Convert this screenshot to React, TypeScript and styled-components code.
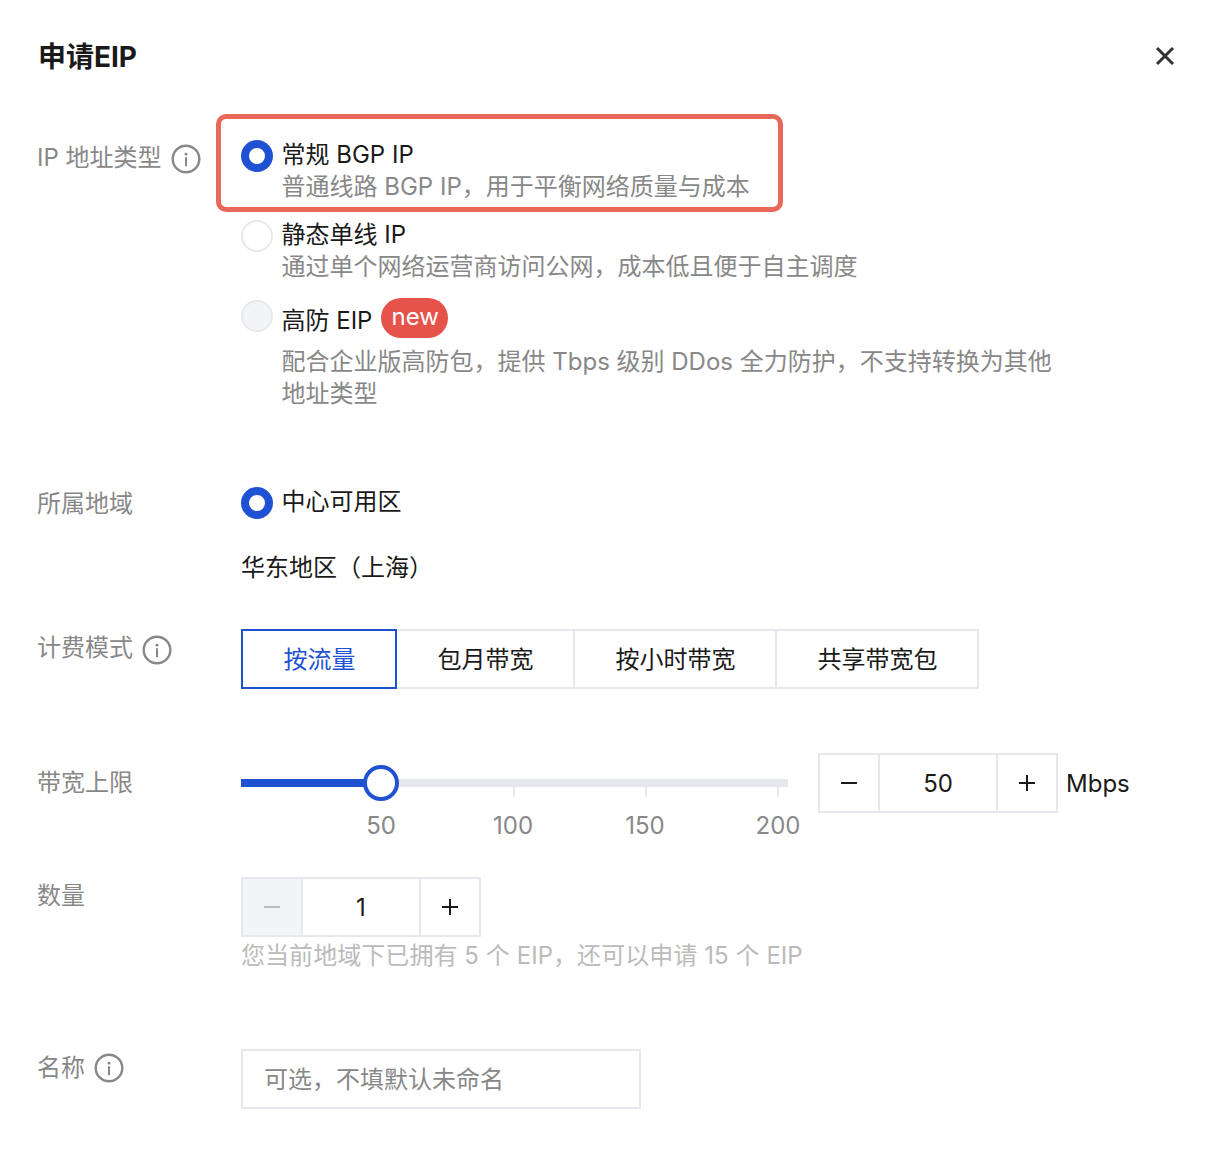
import styled, { createGlobalStyle } from "styled-components";

const BLUE = "#1f52d3";
const LINE = "#e7e8ee";

const GlobalStyle = createGlobalStyle`
    html, body {
        margin: 0;
        padding: 0;
        background: #ffffff;
    }
    * {
        box-sizing: border-box;
    }
    body {
        font-family: Inter, "Noto Sans CJK SC", sans-serif;
        font-size: 24px;
        line-height: 32px;
        color: #1a1a1a;
    }
`;

const Dialog = styled.div`
    width: 1216px;
    height: 1164px;
    padding: 40px 40px 0 38px;
    overflow: hidden;
`;

const Header = styled.div`
    display: flex;
    justify-content: space-between;
    align-items: center;
    height: 32px;
    margin-bottom: 67px;
`;

const Title = styled.h1`
    margin: 0;
    padding-top: 1px;
    font-size: 28px;
    line-height: 32px;
    font-weight: 700;
    color: #1a1a1a;
`;

const CloseButton = styled.svg`
    width: 24px;
    height: 24px;
    margin-right: -1px;
    color: #333333;
`;

const Row = styled.div<{ $top?: number }>`
    display: flex;
    align-items: flex-start;
    margin-top: ${(p) => p.$top ?? 0}px;
`;

const Label = styled.div<{ $pad?: number }>`
    display: flex;
    align-items: center;
    gap: 9px;
    flex: 0 0 204px;
    height: 32px;
    margin-top: ${(p) => p.$pad ?? 0}px;
    margin-left: -1px;
    color: #888888;
    white-space: nowrap;
`;

const InfoGlyph = styled.svg<{ $nudge: number }>`
    width: 30px;
    height: 30px;
    margin-top: ${(p) => p.$nudge}px;
    color: #888888;
`;

const Content = styled.div`
    flex: 1;
    min-width: 0;
`;

const OptionList = styled.div`
    position: relative;
    display: flex;
    flex-direction: column;
    gap: 16px;
`;

const Highlight = styled.div`
    position: absolute;
    left: -25px;
    top: -25px;
    width: 567px;
    height: 98px;
    border: 5px solid #e8695a;
    border-radius: 10px;
`;

const Option = styled.div`
    display: grid;
    grid-template-columns: 32px 1fr;
    column-gap: 8.5px;
`;

const Radio = styled.span<{ $state: "on" | "off" | "disabled" }>`
    display: block;
    width: 32px;
    height: 32px;
    margin-top: 1px;
    margin-bottom: -1px;
    border-radius: 50%;
    background: ${(p) => (p.$state === "disabled" ? "#f3f4f8" : "#ffffff")};
    border: ${(p) => (p.$state === "on" ? `8px solid ${BLUE}` : `2px solid ${LINE}`)};
`;

const OptionTitle = styled.div<{ $tall?: boolean }>`
    display: flex;
    align-items: center;
    gap: 9px;
    height: ${(p) => (p.$tall ? "40px" : "32px")};
    margin-top: ${(p) => (p.$tall ? "-1px" : "0")};
    margin-bottom: ${(p) => (p.$tall ? "8px" : "0")};
`;

const TallTitleText = styled.span`
    margin-top: 6px;
`;

const Description = styled.div`
    grid-column: 2;
    width: 790px;
    color: #888888;
`;

const Badge = styled.span`
    height: 40px;
    padding: 0 9.5px 0 10px;
    border-radius: 20px;
    background: #e5534b;
    color: #ffffff;
    line-height: 38px;
`;

const CityText = styled.div`
    margin-top: 34px;
`;

const Segmented = styled.div`
    display: flex;
    height: 60px;
`;

const Segment = styled.div<{ $width: number; $active?: boolean }>`
    display: flex;
    align-items: center;
    justify-content: center;
    width: ${(p) => p.$width}px;
    height: 60px;
    padding: 2px 0 0 1px;
    margin-left: ${(p) => (p.$active ? "0" : "-2px")};
    border: 2px solid ${(p) => (p.$active ? BLUE : LINE)};
    color: ${(p) => (p.$active ? BLUE : "#1a1a1a")};
    position: relative;
    z-index: ${(p) => (p.$active ? 1 : 0)};
`;

const SliderRow = styled.div`
    display: flex;
    align-items: flex-start;
`;

const Slider = styled.div`
    position: relative;
    flex: 0 0 577px;
    height: 100px;
`;

const Track = styled.div`
    position: absolute;
    left: 0;
    top: 26px;
    width: 547px;
    height: 8px;
    background: ${LINE};
`;

const TrackFill = styled.div`
    height: 100%;
    background: ${BLUE};
`;

const Thumb = styled.div`
    position: absolute;
    top: 12px;
    width: 36px;
    height: 36px;
    margin-left: -18px;
    border-radius: 50%;
    background: #ffffff;
    border: 4px solid ${BLUE};
`;

const Tick = styled.div`
    position: absolute;
    top: 34px;
    width: 2px;
    height: 10px;
    margin-left: -1px;
    background: ${LINE};
`;

const TickLabel = styled.div`
    position: absolute;
    top: 57px;
    transform: translateX(-50%);
    color: #888888;
`;

const Stepper = styled.div`
    display: flex;
    width: 240px;
    height: 60px;
    border: 2px solid ${LINE};
`;

const StepButton = styled.div<{ $disabled?: boolean }>`
    display: flex;
    align-items: center;
    justify-content: center;
    flex: 0 0 58px;
    background: ${(p) => (p.$disabled ? "#f3f4f8" : "#ffffff")};
    color: ${(p) => (p.$disabled ? "#bbbbbb" : "#1a1a1a")};
`;

const StepValue = styled.div`
    display: flex;
    align-items: center;
    justify-content: center;
    flex: 1;
    padding-top: 2px;
    border-left: 2px solid ${LINE};
    border-right: 2px solid ${LINE};
`;

const StepGlyph = styled.svg`
    width: 18px;
    height: 18px;
`;

const Unit = styled.div`
    margin-left: 8px;
    height: 60px;
    line-height: 62px;
`;

const Hint = styled.div`
    margin-top: 3px;
    color: #bbbbbb;
    letter-spacing: 0.06px;
`;

const TextField = styled.input`
    display: block;
    width: 400px;
    height: 60px;
    padding: 0 21px;
    border: 2px solid ${LINE};
    outline: none;
    background: #ffffff;
    font: inherit;
    color: #1a1a1a;

    &::placeholder {
        color: #888888;
        opacity: 1;
    }
`;

const InfoIcon = ({ nudge }: { nudge: number }) => (
    <InfoGlyph viewBox="0 0 30 30" fill="none" $nudge={nudge}>
        <circle cx="15" cy="15" r="13.3" stroke="currentColor" strokeWidth="2.4" />
        <circle cx="15" cy="10.2" r="1.4" fill="currentColor" />
        <rect x="14" y="13.2" width="2" height="9" fill="currentColor" />
    </InfoGlyph>
);

const Minus = () => (
    <StepGlyph viewBox="0 0 18 18">
        <rect x="1" y="8" width="16" height="2" fill="currentColor" />
    </StepGlyph>
);

const Plus = () => (
    <StepGlyph viewBox="0 0 18 18">
        <rect x="1" y="8" width="16" height="2" fill="currentColor" />
        <rect x="8" y="1" width="2" height="16" fill="currentColor" />
    </StepGlyph>
);

const ticks = [
    { at: 273, text: "100", textAt: 272 },
    { at: 405, text: "150", textAt: 404 },
    { at: 537, text: "200", textAt: 537 },
];

export default function App() {
    return (
        <>
            <GlobalStyle />
            <Dialog>
                <Header>
                    <Title>申请EIP</Title>
                    <CloseButton viewBox="0 0 24 24" fill="none">
                        <path d="M4 4 L20 20 M20 4 L4 20" stroke="currentColor" strokeWidth="3" />
                    </CloseButton>
                </Header>

                <Row>
                    <Label $pad={3}>
                        IP 地址类型
                        <InfoIcon nudge={2} />
                    </Label>
                    <Content>
                        <OptionList>
                            <Highlight />
                            <Option>
                                <Radio $state="on" />
                                <OptionTitle>常规 BGP IP</OptionTitle>
                                <Description>普通线路 BGP IP，用于平衡网络质量与成本</Description>
                            </Option>
                            <Option>
                                <Radio $state="off" />
                                <OptionTitle>静态单线 IP</OptionTitle>
                                <Description>通过单个网络运营商访问公网，成本低且便于自主调度</Description>
                            </Option>
                            <Option>
                                <Radio $state="disabled" />
                                <OptionTitle $tall>
                                    <TallTitleText>高防 EIP</TallTitleText>
                                    <Badge>new</Badge>
                                </OptionTitle>
                                <Description>配合企业版高防包，提供 Tbps 级别 DDos 全力防护，不支持转换为其他地址类型</Description>
                            </Option>
                        </OptionList>
                    </Content>
                </Row>

                <Row $top={76}>
                    <Label $pad={2}>所属地域</Label>
                    <Content>
                        <Option>
                            <Radio $state="on" />
                            <OptionTitle>中心可用区</OptionTitle>
                        </Option>
                        <CityText>华东地区（上海）</CityText>
                    </Content>
                </Row>

                <Row $top={45}>
                    <Label $pad={3}>
                        计费模式
                        <InfoIcon nudge={4} />
                    </Label>
                    <Content>
                        <Segmented>
                            <Segment $width={156} $active>按流量</Segment>
                            <Segment $width={180}>包月带宽</Segment>
                            <Segment $width={204}>按小时带宽</Segment>
                            <Segment $width={204}>共享带宽包</Segment>
                        </Segmented>
                    </Content>
                </Row>

                <Row $top={64}>
                    <Label $pad={14}>带宽上限</Label>
                    <Content>
                        <SliderRow>
                            <Slider>
                                <Track>
                                    <TrackFill style={{ width: 140 }} />
                                </Track>
                                {ticks.map((t) => (
                                    <Tick key={t.text} style={{ left: t.at }} />
                                ))}
                                <Thumb style={{ left: 140 }} />
                                <TickLabel style={{ left: 140 }}>50</TickLabel>
                                {ticks.map((t) => (
                                    <TickLabel key={t.text} style={{ left: t.textAt }}>
                                        {t.text}
                                    </TickLabel>
                                ))}
                            </Slider>
                            <Stepper>
                                <StepButton><Minus /></StepButton>
                                <StepValue>50</StepValue>
                                <StepButton><Plus /></StepButton>
                            </Stepper>
                            <Unit>Mbps</Unit>
                        </SliderRow>
                    </Content>
                </Row>

                <Row $top={24}>
                    <Label $pad={3}>数量</Label>
                    <Content>
                        <Stepper>
                            <StepButton $disabled><Minus /></StepButton>
                            <StepValue>1</StepValue>
                            <StepButton><Plus /></StepButton>
                        </Stepper>
                        <Hint>您当前地域下已拥有 5 个 EIP，还可以申请 15 个 EIP</Hint>
                    </Content>
                </Row>

                <Row $top={77}>
                    <Label $pad={3}>
                        名称
                        <InfoIcon nudge={0} />
                    </Label>
                    <Content>
                        <TextField placeholder="可选，不填默认未命名" readOnly />
                    </Content>
                </Row>
            </Dialog>
        </>
    );
}
